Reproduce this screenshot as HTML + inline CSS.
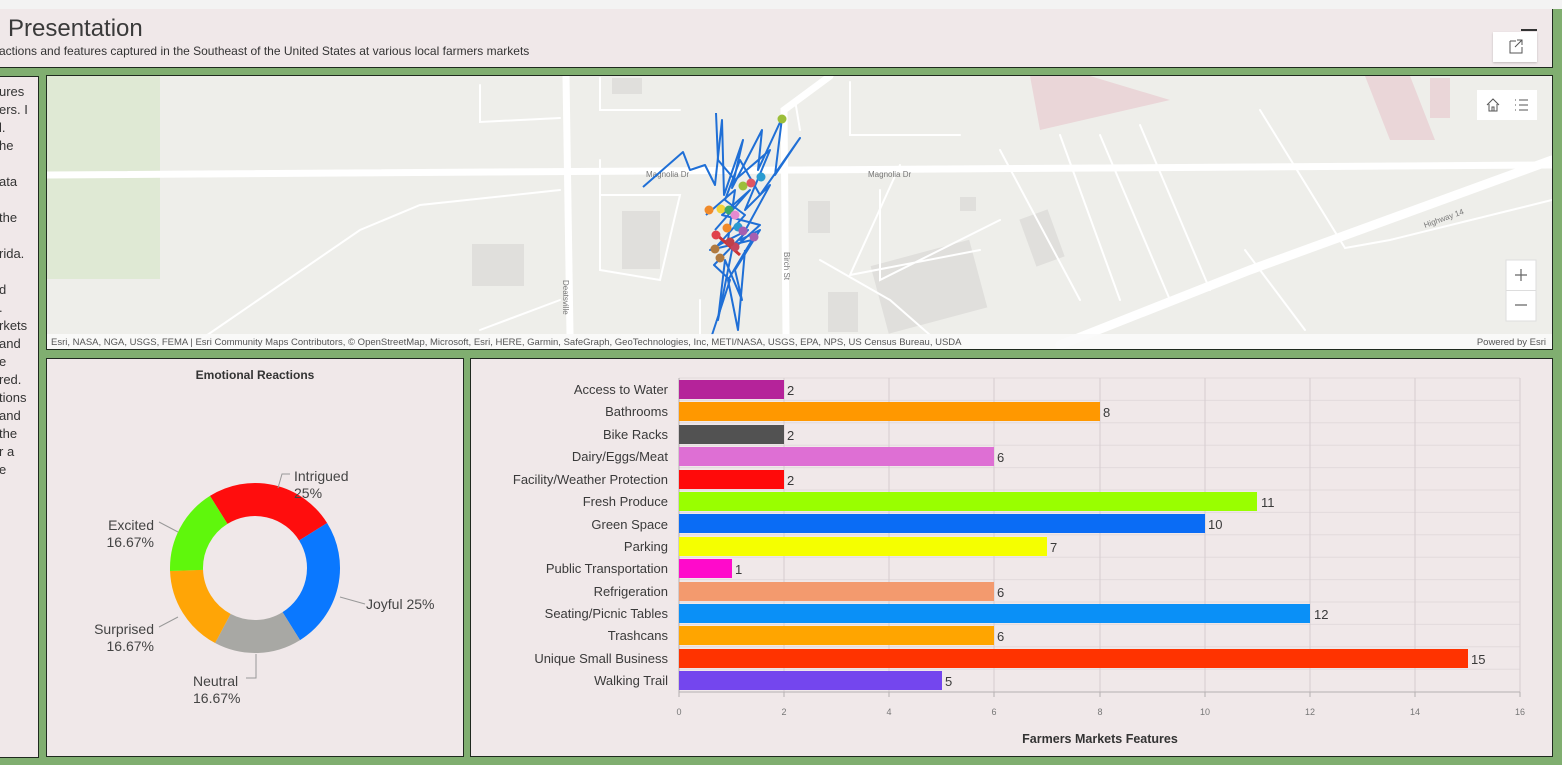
<!DOCTYPE html>
<html><head><meta charset="utf-8"><style>
*{margin:0;padding:0;box-sizing:border-box}
body{width:1562px;height:765px;overflow:hidden;background:#80ae70;font-family:"Liberation Sans",sans-serif;position:relative;color:#333}
.p{position:absolute;background:#f0e8e9;border:1.5px solid #1f2a1f}
#top{position:absolute;left:0;top:0;width:1562px;height:9px;background:#f3f3f3}
</style></head><body>
<div id="top"></div>
<div class="p" style="left:-2px;top:9px;width:1555px;height:59px;border-top:none">
  <div style="position:absolute;left:9px;top:6px;font-size:24px;color:#3a3a3a">Presentation</div>
  <div style="position:absolute;left:0;top:35px;font-size:12px;color:#333;white-space:nowrap">actions and features captured in the Southeast of the United States at various local farmers markets</div>
  <div style="position:absolute;left:1522px;top:20px;width:16px;height:1.5px;background:#333"></div>
  <div style="position:absolute;left:1494px;top:23px;width:44px;height:30px;background:#fff;box-shadow:0 1px 2px rgba(0,0,0,.2)">
    <svg width="44" height="30"><path d="M17 9h6M17 9v12h12v-6M24 8h5v5M29 8l-7 7" fill="none" stroke="#555" stroke-width="1"/></svg>
  </div>
</div>
<div class="p" style="left:-2px;top:76px;width:41px;height:682px;overflow:hidden;font-size:13px;line-height:18px;color:#333">
  <div style="position:absolute;left:0;top:6px;white-space:pre">ures
ers. I
l.
he

ata

the

rida.

d
.
rkets
and
e
red.
tions
and
the
r a
e</div>
</div>
<div class="p" style="left:46px;top:75px;width:1507px;height:275px;background:#eeeeea;overflow:hidden">
<svg width="1507" height="275" style="position:absolute;left:0;top:0">
<g transform="translate(-47,-76)">
<rect x="47" y="76" width="113" height="203" fill="#dfe9d4"/>
<polygon points="1030,76 1090,76 1170,100 1040,130" fill="#ead6d8"/>
<polygon points="1365,76 1410,76 1435,140 1390,140" fill="#ead6d8"/>
<rect x="1430" y="78" width="20" height="40" fill="#ead6d8"/>
<g fill="#e0dfdc"><rect x="472" y="244" width="52" height="42"/><rect x="622" y="211" width="38" height="58"/><rect x="808" y="201" width="22" height="32"/><rect x="878" y="252" width="102" height="70" transform="rotate(-15 928 287)"/><rect x="828" y="292" width="30" height="40"/><rect x="960" y="197" width="16" height="14"/><rect x="1027" y="213" width="30" height="50" transform="rotate(-20 1042 238)"/><rect x="612" y="78" width="30" height="16"/></g>
<g fill="none" stroke="#fff" stroke-linecap="round">
<path d="M47,175 L1552,165" stroke-width="7"/>
<path d="M566,76 L570,335" stroke-width="7"/>
<path d="M786,335 L784,110 L830,76" stroke-width="7"/>
<path d="M1060,345 L1250,270 L1552,160" stroke-width="9"/>
<path d="M200,340 L360,230 L420,205 L560,190" stroke-width="2"/>
<path d="M480,85 L480,122 L560,118 M600,78 L600,110 L680,110 M795,100 L800,130" stroke-width="2"/>
<path d="M850,82 L850,135 L960,135 M880,190 L880,280 L1000,220 M900,165 L850,275 L980,250 M1000,150 L1080,300 M1060,135 L1120,300 M1100,135 L1170,300 M1140,125 L1210,290 M1260,110 L1345,248 L1390,240 L1552,200 M1245,250 L1305,330" stroke-width="2"/>
<path d="M600,160 L600,270 L660,280 L680,195 L600,195 M480,330 L560,300 M700,300 L700,335 M820,260 L890,300 L930,335" stroke-width="2"/>
</g>
<g font-size="8" fill="#777"><text x="646" y="177">Magnolia Dr</text><text x="868" y="177">Magnolia Dr</text><text x="1425" y="228" transform="rotate(-20 1425 228)">Highway 14</text><text x="784" y="252" transform="rotate(90 784 252)">Birch St</text><text x="563" y="280" transform="rotate(90 563 280)">Deatsville</text></g>
<g fill="none" stroke="#1f6fd6" stroke-width="2" stroke-linejoin="round">
<path d="M643,187 L683,152 L690,170 L705,165 L715,185 L722,120 L724,195 L743,140 L732,188 L762,130 L758,170 L782,118 L775,175 L800,138 L760,195 L740,160 L725,200 L745,215 L718,245 L748,230 L714,265 L730,280 L712,335"/>
<path d="M716,113 L718,160 L735,180 L770,150 L745,210 L770,185 L740,240 L760,230 L735,270 L742,300 L725,260 L718,320 L732,250 L760,225 L722,215 L750,190 L715,230"/>
<path d="M706,215 L735,190 L728,240 L710,250 L752,240 L728,280 L738,330 L745,250"/>
</g>
<path d="M718,236 L740,255" stroke="#c33" stroke-width="3"/>
<g><circle cx="782" cy="119" r="4.5" fill="#9cbe3a"/><circle cx="743" cy="186" r="4.5" fill="#9cbe3a"/><circle cx="751" cy="183" r="4.5" fill="#e05563"/><circle cx="761" cy="177" r="4.5" fill="#2a9bd0"/><circle cx="709" cy="210" r="4.5" fill="#f08a2a"/><circle cx="721" cy="209" r="4.5" fill="#f2d33a"/><circle cx="729" cy="210" r="4.5" fill="#3aa86a"/><circle cx="735" cy="215" r="4.5" fill="#e58ad0"/><circle cx="738" cy="227" r="4.5" fill="#2a9bd0"/><circle cx="743" cy="231" r="4.5" fill="#a55fb0"/><circle cx="727" cy="228" r="4.5" fill="#f08a2a"/><circle cx="716" cy="235" r="4.5" fill="#e0404a"/><circle cx="754" cy="237" r="4.5" fill="#a55fb0"/><circle cx="735" cy="247" r="4.5" fill="#c4455e"/><circle cx="715" cy="249" r="4.5" fill="#b07a40"/><circle cx="720" cy="258" r="4.5" fill="#b07a40"/><circle cx="730" cy="242" r="4.5" fill="#c0404a"/></g>
<rect x="47" y="334" width="1505" height="16" fill="#fafafa" opacity=".9"/>
<text x="51" y="345" font-size="9.5" fill="#555">Esri, NASA, NGA, USGS, FEMA | Esri Community Maps Contributors, © OpenStreetMap, Microsoft, Esri, HERE, Garmin, SafeGraph, GeoTechnologies, Inc, METI/NASA, USGS, EPA, NPS, US Census Bureau, USDA</text>
<text x="1546" y="345" font-size="9.5" fill="#555" text-anchor="end">Powered by Esri</text>
<rect x="1477" y="90" width="60" height="30" fill="#fff"/>
<path d="M1487,105 L1493,99 L1499,105 M1489,104 V111 H1497 V104 M1492,111 V107 H1494 V111" fill="none" stroke="#555"/>
<path d="M1519,100h9M1519,105h9M1519,110h9" stroke="#555"/><path d="M1515,100h2M1515,105h2M1515,110h2" stroke="#555" stroke-dasharray="1 1"/>
<rect x="1506" y="260" width="30" height="61" fill="#fff" stroke="#ddd"/>
<path d="M1506,290.5h30" stroke="#ddd"/>
<path d="M1515,275h12M1521,269v12M1515,305h12" stroke="#666" stroke-width="1.2"/>
</g></svg>
</div>
<div class="p" style="left:46px;top:358px;width:418px;height:399px">
<svg width="418" height="399" style="position:absolute;left:0;top:0">
<g transform="translate(-47,-359)">
<text x="255" y="379" font-size="12" font-weight="bold" text-anchor="middle" fill="#333">Emotional Reactions</text>
<g transform="translate(255,568)" fill="none" stroke-width="33">
<circle r="68.5" stroke="#ff0d0d" stroke-dasharray="107.6 500" transform="rotate(-122)"/>
<circle r="68.5" stroke="#0a78ff" stroke-dasharray="107.6 500" transform="rotate(-32)"/>
<circle r="68.5" stroke="#a8a8a4" stroke-dasharray="71.7 500" transform="rotate(58)"/>
<circle r="68.5" stroke="#ffa506" stroke-dasharray="71.7 500" transform="rotate(118)"/>
<circle r="68.5" stroke="#5ff70c" stroke-dasharray="71.7 500" transform="rotate(178)"/>
</g>
<g fill="none" stroke="#999"><path d="M278,488 L282,474 L290,474M340,597 L365,604M159,522 L178,532M159,627 L178,617M256,654 L256,678 L246,678"/></g>
<g font-size="14" fill="#444"><text x="294" y="481">Intrigued</text><text x="294" y="498">25%</text><text x="366" y="609">Joyful 25%</text><text x="154" y="530" text-anchor="end">Excited</text><text x="154" y="547" text-anchor="end">16.67%</text><text x="154" y="634" text-anchor="end">Surprised</text><text x="154" y="651" text-anchor="end">16.67%</text><text x="193" y="686">Neutral</text><text x="193" y="703">16.67%</text></g>
</g></svg>
</div>
<div class="p" style="left:470px;top:358px;width:1083px;height:399px">
<svg width="1083" height="399" style="position:absolute;left:0;top:0">
<g transform="translate(-471,-359)" font-family="Liberation Sans, sans-serif">
<g stroke="#e2dadc" stroke-width="1">
<path d="M679,378H1520M679,400.4H1520M679,422.8H1520M679,445.2H1520M679,467.6H1520M679,490H1520M679,512.4H1520M679,534.8H1520M679,557.2H1520M679,579.6H1520M679,602H1520M679,624.4H1520M679,646.8H1520M679,669.2H1520"/>
<path d="M784,378V692M889,378V692M994,378V692M1100,378V692M1205,378V692M1310,378V692M1415,378V692M1520,378V692" stroke="#d6cdd0"/>
</g>
<path d="M679,378V692H1520M679,692v5M784,692v5M889,692v5M994,692v5M1100,692v5M1205,692v5M1310,692v5M1415,692v5M1520,692v5" stroke="#b5b0b1" fill="none"/>
<g font-size="9" fill="#777" text-anchor="middle"><text x="679" y="715">0</text><text x="784" y="715">2</text><text x="889" y="715">4</text><text x="994" y="715">6</text><text x="1100" y="715">8</text><text x="1205" y="715">10</text><text x="1310" y="715">12</text><text x="1415" y="715">14</text><text x="1520" y="715">16</text></g>
<text x="1100" y="743" font-size="12.5" font-weight="bold" fill="#333" text-anchor="middle">Farmers Markets Features</text>
<g font-size="13" fill="#3a3a3a">
<g text-anchor="end">
<text x="668" y="394">Access to Water</text><text x="668" y="416">Bathrooms</text><text x="668" y="439">Bike Racks</text><text x="668" y="461">Dairy/Eggs/Meat</text><text x="668" y="484">Facility/Weather Protection</text><text x="668" y="506">Fresh Produce</text><text x="668" y="529">Green Space</text><text x="668" y="551">Parking</text><text x="668" y="573">Public Transportation</text><text x="668" y="596">Refrigeration</text><text x="668" y="618">Seating/Picnic Tables</text><text x="668" y="640">Trashcans</text><text x="668" y="663">Unique Small Business</text><text x="668" y="685">Walking Trail</text>
</g>
<g>
<rect x="679" y="380" width="105" height="19" fill="#b5239a"/><text x="787" y="395">2</text>
<rect x="679" y="402" width="421" height="19" fill="#ff9800"/><text x="1103" y="417">8</text>
<rect x="679" y="425" width="105" height="19" fill="#525252"/><text x="787" y="440">2</text>
<rect x="679" y="447" width="315" height="19" fill="#de6fd4"/><text x="997" y="462">6</text>
<rect x="679" y="470" width="105" height="19" fill="#ff0a0a"/><text x="787" y="485">2</text>
<rect x="679" y="492" width="578" height="19" fill="#99ff00"/><text x="1261" y="507">11</text>
<rect x="679" y="514" width="526" height="19" fill="#0a6cf5"/><text x="1208" y="529">10</text>
<rect x="679" y="537" width="368" height="19" fill="#f5ff00"/><text x="1050" y="552">7</text>
<rect x="679" y="559" width="53" height="19" fill="#ff0acb"/><text x="735" y="574">1</text>
<rect x="679" y="582" width="315" height="19" fill="#f39a6e"/><text x="997" y="597">6</text>
<rect x="679" y="604" width="631" height="19" fill="#0a90f7"/><text x="1314" y="619">12</text>
<rect x="679" y="626" width="315" height="19" fill="#ffa500"/><text x="997" y="641">6</text>
<rect x="679" y="649" width="789" height="19" fill="#ff3300"/><text x="1471" y="664">15</text>
<rect x="679" y="671" width="263" height="19" fill="#7446ee"/><text x="945" y="686">5</text>
</g></g>
</g></svg>
</div>
</body></html>
